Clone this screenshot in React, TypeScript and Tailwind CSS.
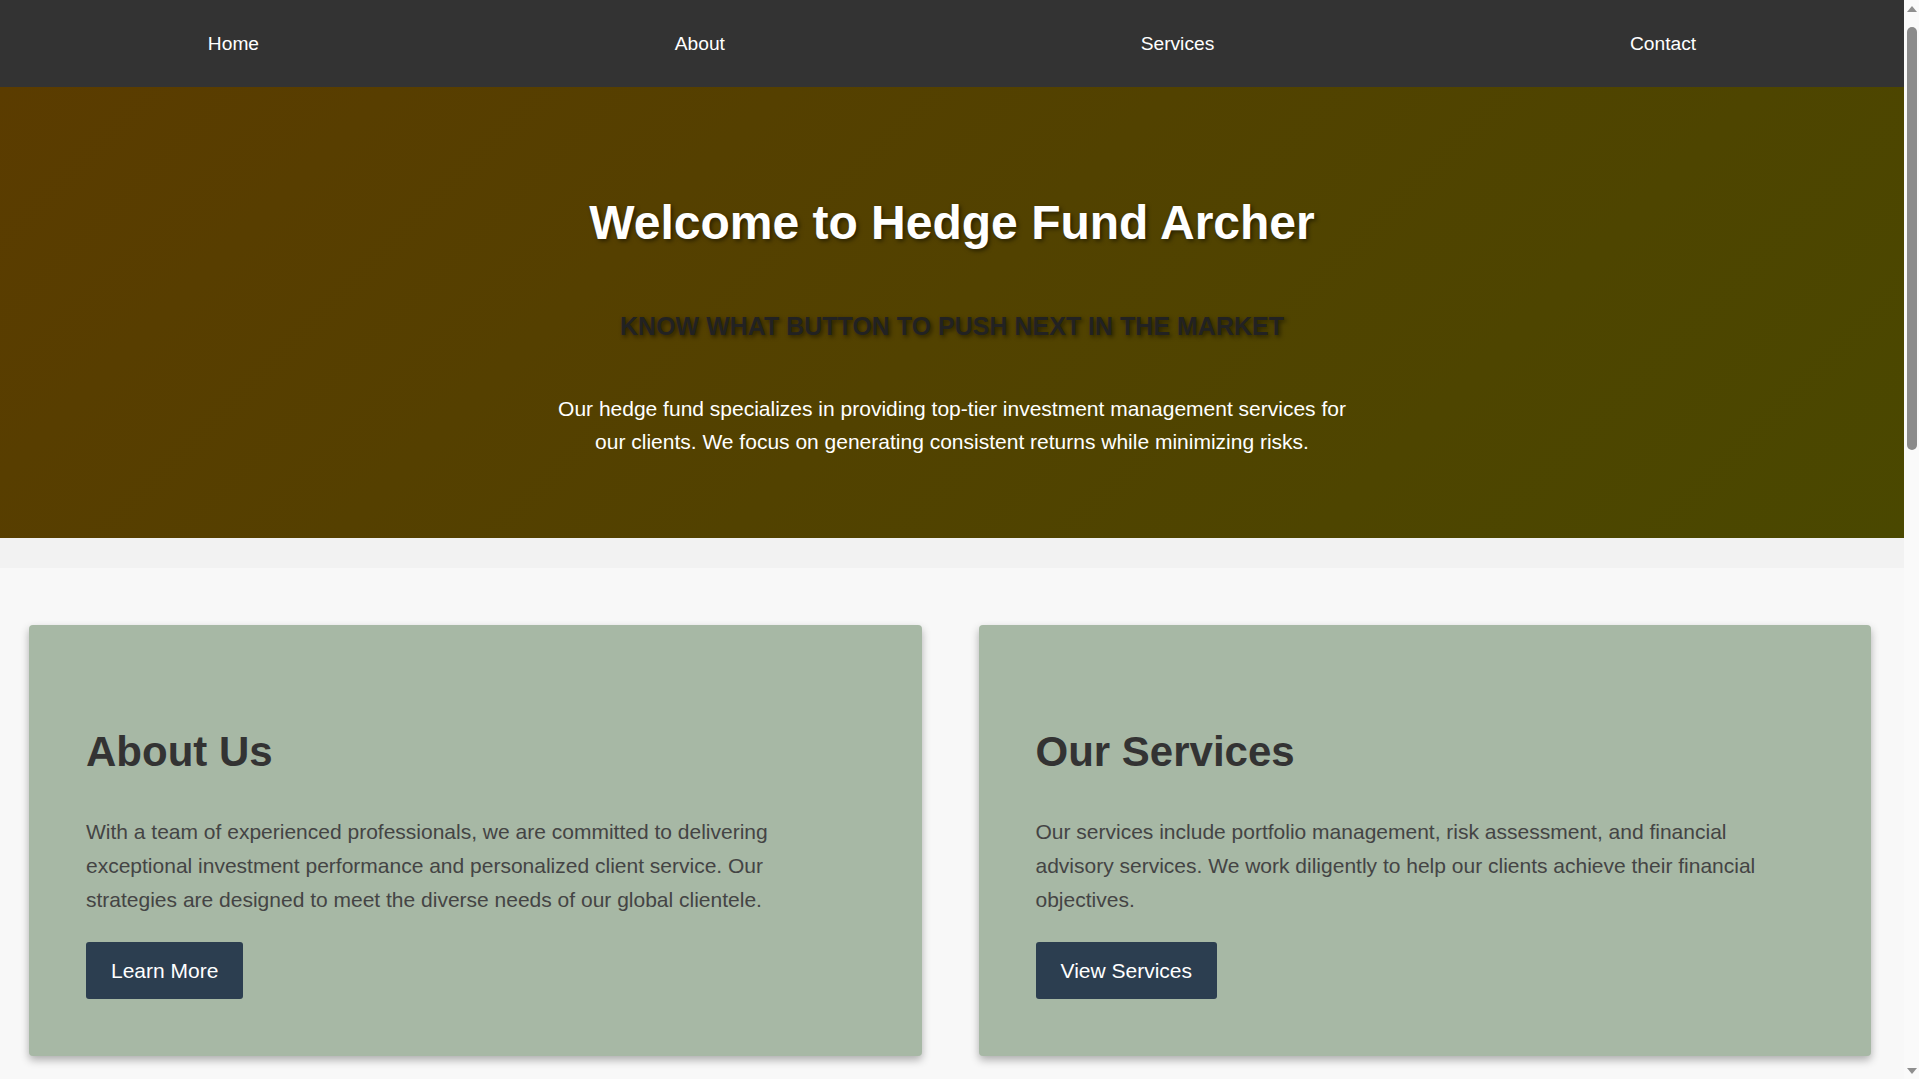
import React from 'react';

const navLinks = ['Home', 'About', 'Services', 'Contact'];

const cards = [
  {
    title: 'About Us',
    text: 'With a team of experienced professionals, we are committed to delivering exceptional investment performance and personalized client service. Our strategies are designed to meet the diverse needs of our global clientele.',
    button: 'Learn More',
  },
  {
    title: 'Our Services',
    text: 'Our services include portfolio management, risk assessment, and financial advisory services. We work diligently to help our clients achieve their financial objectives.',
    button: 'View Services',
  },
];

const extra = [
  {
    title: 'Our Approach',
    text: 'We combine rigorous research with disciplined risk controls to build portfolios that can weather changing market conditions.',
  },
  {
    title: 'Contact Us',
    text: 'Reach out to our team to learn how we can help you reach your investment goals. We look forward to hearing from you.',
  },
];

// classic browser scrollbar, drawn since the headless page hides the real one
function Scrollbar() {
  return (
    <aside className="w-[15px] shrink-0 bg-[#fafafa] flex flex-col items-center">
      <div className="h-[17px] flex items-center justify-center">
        <svg width="10" height="6" viewBox="0 0 10 6">
          <path d="M0 6 L5 0 L10 6 Z" fill="#8f8f8f" />
        </svg>
      </div>
      <div className="mt-[10px] h-[423px] w-[10px] rounded-full bg-[#8b8b8b]" />
      <div className="flex-1" />
      <div className="h-[17px] flex items-center justify-center">
        <svg width="10" height="6" viewBox="0 0 10 6">
          <path d="M0 0 L10 0 L5 6 Z" fill="#8f8f8f" />
        </svg>
      </div>
    </aside>
  );
}

export default function App() {
  return (
    <div className="h-screen flex bg-[#f8f8f8] font-['Liberation_Sans',Arial,sans-serif]">
      <div className="flex-1 min-w-0 overflow-y-auto [scrollbar-width:none] [&::-webkit-scrollbar]:hidden">
        <nav className="bg-[#333333] h-[87px] flex items-center justify-around">
          {navLinks.map((link) => (
            <a key={link} href="#" className="text-white text-[19.2px] leading-none">
              {link}
            </a>
          ))}
        </nav>

        <header className="bg-[linear-gradient(135deg,#5b3c00_0%,#524200_50%,#4a4800_100%)] pt-[108px] pb-[80px] text-center">
          <h1 className="text-white text-[48px] leading-[55px] font-bold [text-shadow:2px_2px_4px_rgba(0,0,0,0.5)]">
            Welcome to Hedge Fund Archer
          </h1>
          <h2 className="mt-[62px] text-[#222222] text-[25px] leading-[28px] font-bold uppercase [text-shadow:2px_2px_4px_rgba(0,0,0,0.5)]">
            Know what button to push next in the market
          </h2>
          <p className="mt-[52px] mx-auto max-w-[800px] text-white text-[21px] leading-[33px]">
            Our hedge fund specializes in providing top-tier investment management services for our clients. We focus on generating consistent returns while minimizing risks.
          </p>
        </header>

        <div className="h-[30px] bg-[#f2f2f2]" />

        <main className="pt-[57px] pl-[29px] pr-[33px] grid grid-cols-2 gap-[57px]">
          {cards.map((card) => (
            <section
              key={card.title}
              className="bg-[#a7b8a5] rounded-[4px] shadow-[0_4px_8px_rgba(0,0,0,0.3)] px-[57px] pt-[103px] pb-[57px]"
            >
              <h2 className="text-[#333333] text-[42px] leading-[48px] font-bold">{card.title}</h2>
              <p className="mt-[39px] max-w-[760px] text-[#444444] text-[21px] leading-[34px]">{card.text}</p>
              <button className="mt-[25px] h-[57px] px-[25px] bg-[#2c3e50] text-white text-[21px] rounded-[3px]">
                {card.button}
              </button>
            </section>
          ))}
        </main>

        <section className="mt-[60px] pl-[29px] pr-[33px] grid grid-cols-2 gap-[57px]">
          {extra.map((card) => (
            <div
              key={card.title}
              className="bg-[#a7b8a5] rounded-[4px] shadow-[0_4px_8px_rgba(0,0,0,0.3)] px-[57px] py-[80px]"
            >
              <h2 className="text-[#333333] text-[42px] leading-[48px] font-bold">{card.title}</h2>
              <p className="mt-[39px] max-w-[760px] text-[#444444] text-[21px] leading-[34px]">{card.text}</p>
            </div>
          ))}
        </section>

        <section className="mt-[80px] px-[29px] text-center">
          <h2 className="text-[#333333] text-[36px] font-bold">Get in Touch</h2>
          <p className="mt-6 mx-auto max-w-[800px] text-[#444444] text-[21px] leading-[34px]">
            Email us at info@hedgefundarcher.com or call +1 (555) 123-4567. Our advisors are available Monday through Friday, 9am to 6pm.
          </p>
          <div className="h-[520px]" />
        </section>

        <footer className="bg-[#333333] py-8 text-center text-white text-[16px]">
          &copy; 2024 Hedge Fund Archer. All rights reserved.
        </footer>
      </div>
      <Scrollbar />
    </div>
  );
}
